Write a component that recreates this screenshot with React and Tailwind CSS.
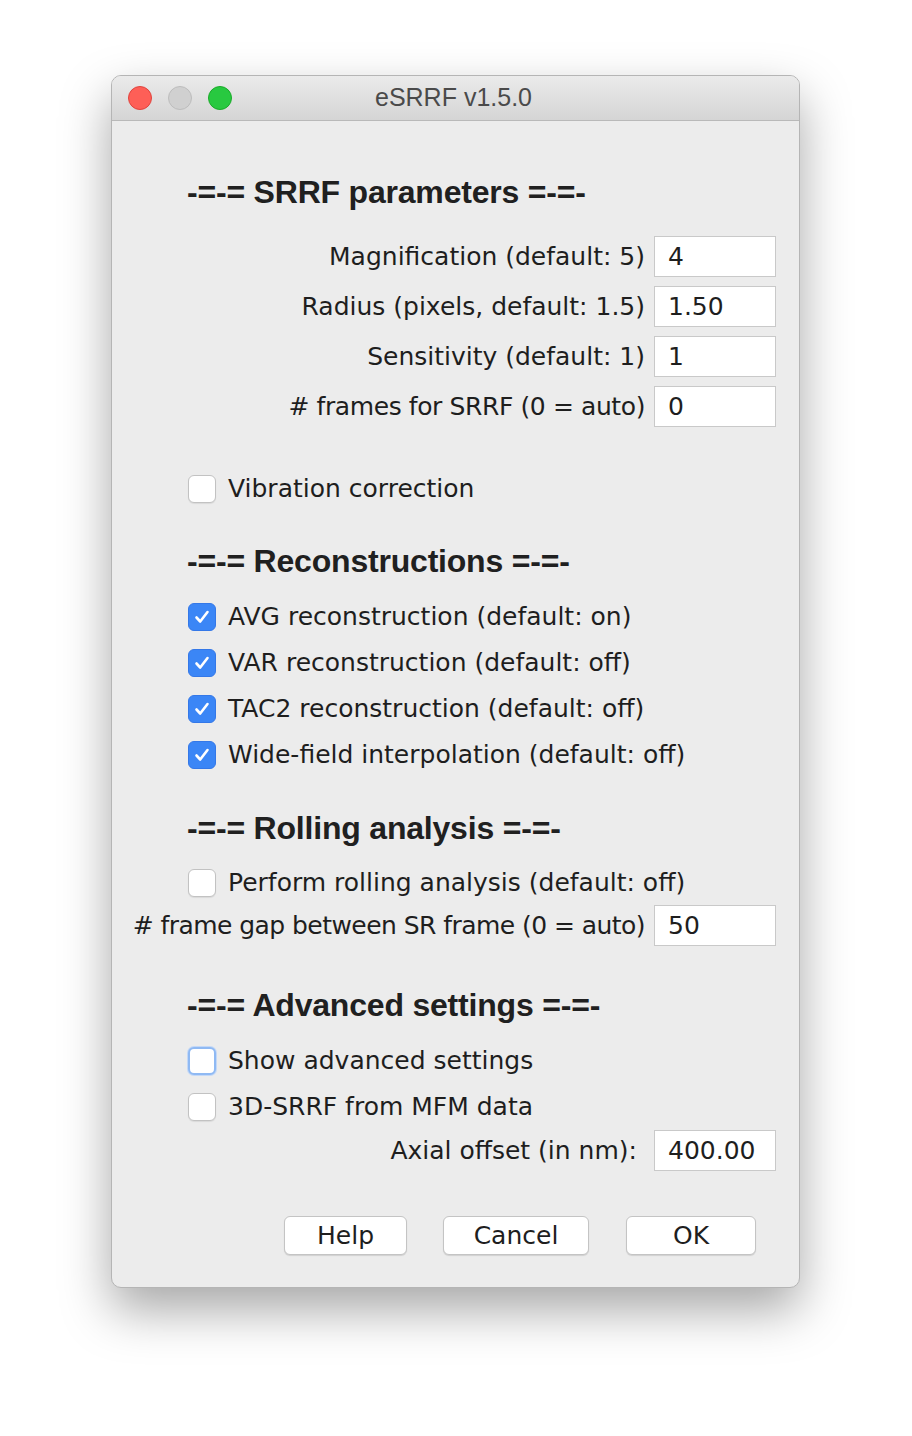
import React from 'react';

const body = { fontFamily: '"DejaVu Sans", "Liberation Sans", sans-serif' };
const head = { fontFamily: '"Liberation Sans", Arial, sans-serif' };

const Heading = ({ children, className = '' }) => (
  <div className={`h-[36px] flex items-center pl-[75px] text-[32px] font-bold text-[#202020] tracking-[-0.2px] ${className}`} style={head}>
    {children}
  </div>
);

const Field = ({ value }) => (
  <div className="w-[122px] h-[41px] shrink-0 bg-white border border-[#c9c9c9] flex items-center pl-[13px] text-[25px] text-[#1e1e1e]">
    {value}
  </div>
);

const FieldRow = ({ label, value, className = '', labelClass = 'mr-[9px]' }) => (
  <div className={`flex items-center justify-end pr-[23px] ${className}`}>
    <span className={`text-[25px] text-[#1e1e1e] whitespace-nowrap ${labelClass}`}>{label}</span>
    <Field value={value} />
  </div>
);

const Check = ({ checked, focus }) => (
  <div
    className={`w-[28px] h-[28px] shrink-0 rounded-[6px] flex items-center justify-center ${
      checked
        ? 'bg-[#3b86f6] border border-[#3478e8]'
        : focus
        ? 'bg-white border-2 border-[#8fb9f3] shadow-[0_0_0_1px_#c3d8f7]'
        : 'bg-white border border-[#c2c2c2] shadow-[0_1px_1px_rgba(0,0,0,0.08)]'
    }`}
  >
    {checked && (
      <svg width="18" height="18" viewBox="0 0 18 18">
        <path d="M3.5 9.5 L7.2 13.5 L14.5 4" fill="none" stroke="white" strokeWidth="2.6" strokeLinecap="round" strokeLinejoin="round" />
      </svg>
    )}
  </div>
);

const CheckRow = ({ label, checked, focus, className = '' }) => (
  <div className={`h-[36px] flex items-center pl-[76px] ${className}`}>
    <Check checked={checked} focus={focus} />
    <span className="ml-[12px] text-[25px] text-[#1e1e1e] whitespace-nowrap">{label}</span>
  </div>
);

const Button = ({ children, className = '' }) => (
  <div className={`h-[39px] bg-white border border-[#c4c4c4] rounded-[6px] shadow-[0_1px_1px_rgba(0,0,0,0.12)] flex items-center justify-center text-[25px] text-[#1e1e1e] ${className}`}>
    {children}
  </div>
);

export default function App() {
  return (
    <div className="w-[912px] h-[1436px] bg-white pt-[75px] pl-[111px]" style={body}>
      <div className="w-[689px] h-[1213px] rounded-[10px] bg-[#ececec] border border-[#b5b5b5] shadow-[0_22px_50px_rgba(0,0,0,0.35)] overflow-hidden flex flex-col">
        {/* title bar */}
        <div className="h-[45px] shrink-0 bg-gradient-to-b from-[#ebebeb] to-[#d5d5d5] border-b border-[#b9b9b9] flex items-center relative">
          <div className="flex items-center gap-[16px] pl-[16px]">
            <div className="w-[24px] h-[24px] rounded-full bg-[#fe5f57] border border-[#e0443e]" />
            <div className="w-[24px] h-[24px] rounded-full bg-[#d0d0d0] border border-[#bdbdbd]" />
            <div className="w-[24px] h-[24px] rounded-full bg-[#28c940] border border-[#1aab29]" />
          </div>
          <div className="absolute inset-0 flex items-center justify-center pr-[4px] text-[25px] text-[#4a4a4a] pointer-events-none" style={head}>
            eSRRF v1.5.0
          </div>
        </div>

        <div className="flex flex-col">
          <Heading className="mt-[53px]">-=-= SRRF parameters =-=-</Heading>
          <div className="flex flex-col gap-[9px] mt-[26px]">
            <FieldRow label="Magnification (default: 5)" value="4" />
            <FieldRow label="Radius (pixels, default: 1.5)" value="1.50" />
            <FieldRow label="Sensitivity (default: 1)" value="1" />
            <FieldRow label="# frames for SRRF (0 = auto)" value="0" labelClass="mr-[9px] tracking-[-0.4px]" />
          </div>

          <CheckRow label="Vibration correction" className="mt-[44px]" />

          <Heading className="mt-[36px]">-=-= Reconstructions =-=-</Heading>
          <div className="flex flex-col gap-[10px] mt-[20px]">
            <CheckRow label="AVG reconstruction (default: on)" checked />
            <CheckRow label="VAR reconstruction (default: off)" checked />
            <CheckRow label="TAC2 reconstruction (default: off)" checked />
            <CheckRow label="Wide-field interpolation (default: off)" checked />
          </div>

          <Heading className="mt-[37px]">-=-= Rolling analysis =-=-</Heading>
          <CheckRow label="Perform rolling analysis (default: off)" className="mt-[19px]" />
          <FieldRow label="# frame gap between SR frame (0 = auto)" value="50" className="mt-[4px]" labelClass="mr-[9px] tracking-[-0.55px]" />

          <Heading className="mt-[41px]">-=-= Advanced settings =-=-</Heading>
          <CheckRow label="Show advanced settings" focus className="mt-[20px]" />
          <CheckRow label="3D-SRRF from MFM data" className="mt-[10px]" />
          <FieldRow label="Axial offset (in nm):" value="400.00" className="mt-[5px]" labelClass="mr-[17px]" />

          <div className="flex items-center mt-[45px] pl-[172px]">
            <Button className="w-[123px]">Help</Button>
            <Button className="w-[146px] ml-[36px]">Cancel</Button>
            <Button className="w-[130px] ml-[37px]">OK</Button>
          </div>
        </div>
      </div>
    </div>
  );
}
